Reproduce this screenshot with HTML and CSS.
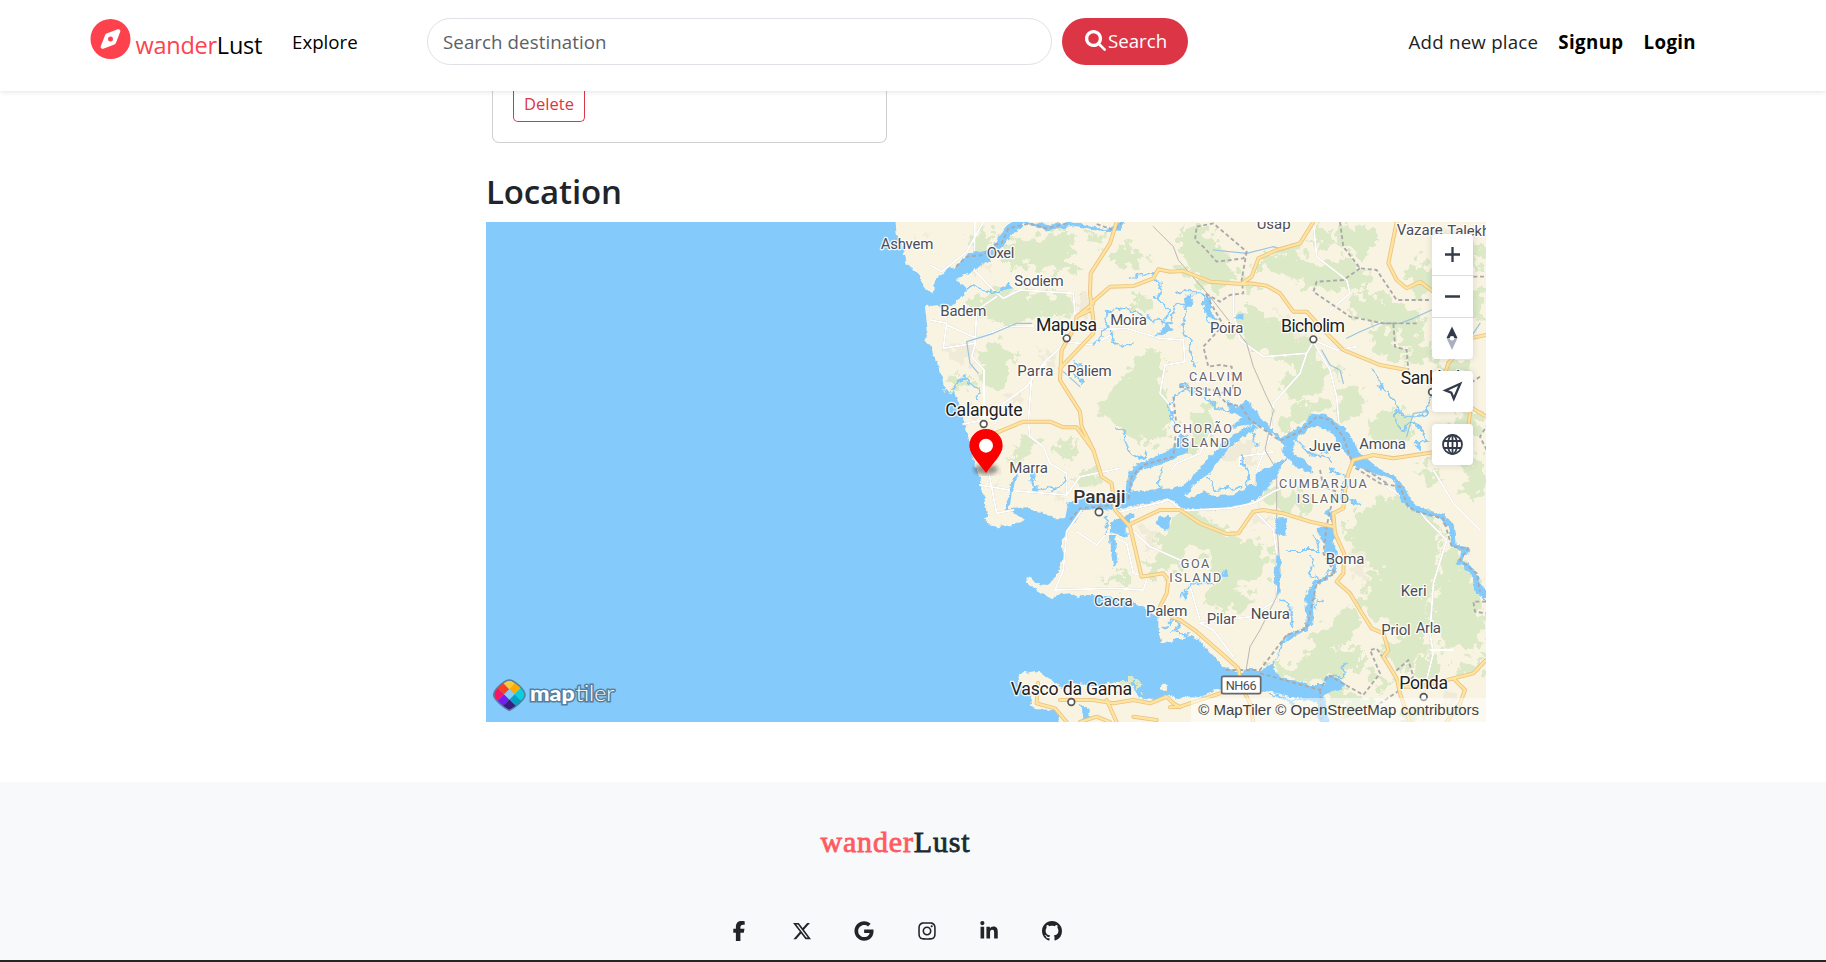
FILE: index.html
```html
<!DOCTYPE html>
<html lang="en">
<head>
<meta charset="utf-8">
<title>wanderLust</title>
<link rel="stylesheet" href="styles.css">
</head>
<body>
<nav class="navbar">
  <a class="brand"><svg class="brand-icon" viewBox="0 0 512 512"><path d="M256 512A256 256 0 1 0 256 0a256 256 0 1 0 0 512zm50.7-186.9L162.4 380.6c-19.4 7.5-38.5-11.6-31-31l55.5-144.3c3.3-8.5 9.9-15.1 18.4-18.4l144.3-55.5c19.4-7.5 38.5 11.6 31 31L325.1 306.7c-3.2 8.5-9.9 15.1-18.4 18.4zM288 256a32 32 0 1 0 -64 0 32 32 0 1 0 64 0z"/></svg><span class="brand-text"><span class="accent">wander</span>Lust</span></a>
  <a class="explore">Explore</a>
  <form class="search">
    <div class="search-input">Search destination</div>
    <div class="search-btn"><svg viewBox="0 0 512 512"><path d="M416 208c0 45.9-14.9 88.3-40 122.7L502.6 457.4c12.5 12.5 12.5 32.8 0 45.3s-32.8 12.5-45.3 0L330.7 376c-34.4 25.2-76.8 40-122.7 40C93.1 416 0 322.9 0 208S93.1 0 208 0S416 93.1 416 208zM208 336a128 128 0 1 0 0-256 128 128 0 1 0 0 256z"/></svg><span>Search</span></div>
  </form>
  <div class="nav-right"><a class="add">Add new place</a><a class="signup">Signup</a><a class="login">Login</a></div>
</nav>

<main class="content">
  <div class="card"><span class="delete">Delete</span></div>
  <h3 class="heading">Location</h3>
  <div class="map">
    <svg class="map-canvas" viewBox="-1182 6 3000 1500">
      <defs>
        <filter id="rough" x="-5%" y="-5%" width="110%" height="110%"><feTurbulence type="fractalNoise" baseFrequency="0.03" numOctaves="4" seed="4"/><feDisplacementMap in="SourceGraphic" scale="90" xChannelSelector="R" yChannelSelector="G"/></filter>
        <filter id="coast" x="-5%" y="-5%" width="110%" height="110%"><feTurbulence type="fractalNoise" baseFrequency="0.05" numOctaves="3" seed="9"/><feDisplacementMap in="SourceGraphic" scale="18" xChannelSelector="R" yChannelSelector="G"/></filter>
        <filter id="creeks" x="-5%" y="-5%" width="110%" height="110%"><feTurbulence type="fractalNoise" baseFrequency="0.04" numOctaves="3" seed="12"/><feDisplacementMap in="SourceGraphic" scale="34" xChannelSelector="R" yChannelSelector="G"/></filter>
        <filter id="soft"><feGaussianBlur stdDeviation="6"/></filter>
        <path id="main-roads" d="M710 6 690 70 632 160 630 220 640 300 640 340 540 445M640 250 590 290 585 320 545 390 540 480 600 575 605 620 640 690 665 770 695 790 705 870 750 920 785 1070 850 1060 865 1080 860 1120 840 1160M632 270 590 290M633 250 690 200 760 198 820 175 835 148 870 155 910 153 990 185 1085 192 1110 190 1160 197 1200 220 1240 275 1280 275 1340 340 1390 390 1500 435 1580 450M1085 190 1115 170 1135 115 1190 90 1260 70 1300 6M345 640 430 605 510 605 550 622 590 622 640 690M745 915 840 870 900 870 960 910 1040 942 1075 940 1120 875 1150 870 1210 880 1290 905 1358 920M1405 760 1395 810 1390 865 1360 880 1365 940 1392 1000 1390 1060 1370 1085 1410 1120 1440 1170 1475 1225 1510 1240 1525 1290 1510 1310 1550 1375 1560 1420 1590 1506M1405 760 1420 720 1480 705 1540 715 1640 700 1700 690 1765 620 1770 580M1550 6 1525 130 1550 180 1580 205 1620 185 1660 215M1818 345 1770 355 1705 430 1695 460M1770 560 1818 590M875 1190 900 1200 950 1235 1030 1305 1075 1345 1085 1400 1110 1450 1120 1506M870 1462 900 1460 1020 1420M474 1388 470 1450 525 1465 560 1506M540 1440 640 1440 700 1450 760 1440 810 1450 860 1430 880 1450 900 1462M680 1440 710 1506M600 1506 650 1490 690 1506M760 1490 830 1500M1818 1320 1780 1360 1720 1375 1620 1400 1560 1400M1720 1375 1755 1410 1740 1450 1700 1506"/>
      </defs>
      <rect class="water" x="-1182" y="6" width="3000" height="1500"/>
      <g filter="url(#coast)">
        <path class="land" d="M45 -10 50 40 70 75 80 130 105 150 125 180 130 200 157 222 165 185 200 150 228 140 250 115 270 100 300 100 300 140 225 178 262 212 215 255 180 262 172 256 135 258 138 290 143 330 135 360 152 380 165 420 178 440 190 495 210 520 225 515 235 545 245 580 255 610 265 650 275 700 290 750 300 770 315 850 325 888 312 895 330 915 350 922 400 915 435 900 415 885 385 870 400 866 440 862 480 878 520 895 555 895 565 850 605 850 608 870 545 960 548 1010 530 1070 500 1095 485 1093 440 1070 440 1083 480 1120 515 1140 525 1125 570 1120 590 1130 640 1125 700 1135 760 1145 800 1170 835 1190 835 1230 845 1270 880 1260 930 1248 960 1260 990 1300 1030 1340 1090 1360 1200 1400 1010 1412 960 1430 900 1435 860 1425 830 1440 800 1438 770 1424 760 1395 710 1385 650 1402 600 1390 540 1400 510 1378 475 1352 430 1360 415 1370 422 1395 455 1420 450 1455 470 1468 525 1470 540 1520H1850V-10Z"/>
        <ellipse class="land" cx="852" cy="1402" rx="9" ry="11"/>
      </g>
      <g class="built" filter="url(#rough)">
        <path d="M100 60 130 50 125 90ZM280 140 340 125 330 170ZM580 230 630 240 610 300ZM200 380 260 370 280 420 220 430ZM230 570 290 560 280 600ZM380 530 430 500 410 560ZM330 770 360 760 350 800ZM960 90 1050 80 1050 170 990 170ZM1130 860 1180 890 1120 920ZM780 920 840 940 810 1000ZM1410 980 1480 1000 1440 1090ZM1310 1310 1360 1310 1330 1370ZM520 800 560 850 530 840ZM480 400 530 390 510 440ZM1190 260 1290 340 1240 360ZM1690 1400 1740 1440 1690 1480ZM1690 620 1760 640 1720 690ZM1020 680 1110 660 1130 740 1060 720Z"/>
      </g>
      <g class="wood" filter="url(#rough)">
        <path d="M265 60 310 20 350 50 310 90 260 90ZM370 90 440 45 500 50 560 35 590 75 560 110 600 150 520 160 450 140 380 135ZM270 235 340 205 420 215 500 215 580 235 570 295 470 285 400 325 330 295 270 275ZM280 400 340 365 395 380 395 430 375 510 330 515 295 470 320 440ZM200 500 240 465 290 480 250 500 215 520ZM650 570 740 460 790 390 855 400 850 530 880 600 830 650 790 610 700 600ZM740 270 770 230 825 235 810 270ZM620 30 680 50 660 80 630 60ZM680 115 740 60 790 110 785 155 740 140ZM395 700 440 650 480 655 460 690 410 730ZM520 675 570 640 600 690 570 730 540 710ZM580 780 620 750 665 755 640 800 595 800Z"/>
        <path d="M900 10 990 30 1030 90 980 130 960 190 900 130ZM1110 130 1230 80 1320 140 1400 110 1470 160 1450 210 1330 210 1230 170ZM1400 260 1450 210 1560 240 1600 300 1530 320 1450 300ZM1060 310 1110 260 1200 310 1300 360 1330 430 1260 450 1170 400 1100 380ZM930 140 1030 90 1070 160 1050 200 960 210ZM1080 170 1150 200 1100 220ZM1370 20 1460 10 1490 60 1450 110 1380 80ZM1580 160 1630 110 1700 160 1650 220 1600 220ZM1570 270 1640 290 1620 360 1690 430 1600 430 1560 370ZM1460 340 1530 310 1540 370 1590 430 1500 410ZM1200 490 1270 430 1350 460 1310 520 1220 540ZM1360 550 1430 490 1460 560 1400 610ZM1460 600 1570 560 1610 640 1560 690 1470 640ZM1680 430 1780 400 1780 470 1690 485ZM1720 570 1800 580 1815 640 1740 665ZM1740 60 1810 80 1800 135 1740 115ZM930 600 990 550 1000 640 950 680 920 730ZM1350 450 1390 440 1390 470ZM1280 70 1330 20 1380 80ZM1190 590 1260 545 1330 540 1340 570 1270 600 1210 640ZM1700 230 1800 200 1810 300 1730 320Z"/>
        <path d="M1140 820 1270 800 1320 850 1260 880 1180 865ZM1390 920 1500 820 1600 850 1665 910 1690 960 1660 1030 1700 1060 1650 1130 1500 1135 1440 1070 1500 1060 1430 990ZM1420 1140 1530 1110 1650 1130 1640 1220 1600 1290 1520 1210ZM1340 1200 1400 1150 1440 1190 1390 1290 1310 1260ZM1690 980 1730 990 1800 1100 1805 1300 1690 1280 1640 1190 1680 1110ZM1500 1290 1620 1230 1640 1300 1580 1360ZM1640 1300 1700 1320 1660 1410 1600 1370ZM1720 1350 1810 1310 1810 1330 1750 1380ZM1180 1360 1270 1310 1330 1230 1370 1290 1450 1290 1430 1350 1320 1390 1220 1380ZM1150 1330 1180 1310 1240 1370 1200 1380ZM1330 1400 1400 1400 1490 1450 1390 1480ZM1730 700 1770 780 1740 810 1790 840 1815 790 1815 710ZM1600 740 1650 720 1690 790 1650 780Z"/>
        <path d="M870 900 940 870 1060 950 1090 945 1170 1000 1140 1090 1060 1110 1120 1140 1060 1180 970 1150 1010 1060 960 990 840 980 850 940ZM820 970 850 940 900 960 920 1020 870 1060 800 1060 790 1020 840 1010ZM660 1070 750 1060 750 1100 690 1080ZM650 560 690 530 700 580ZM850 540 890 600 810 680 730 640 680 590ZM1460 1350 1530 1380 1500 1420ZM1560 1470 1620 1460 1640 1506H1570ZM700 1380 740 1380 770 1410 720 1415Z"/>
      </g>
      <g class="minor">
        <path d="M285 6 282 150 345 215 370 235 420 210 580 220 585 280 590 320M150 135 185 155 260 95 310 6M350 230 290 270 285 370 190 385 200 310 150 300M200 315 290 355 380 320 460 318M285 375 275 410 312 450 312 600M312 600 250 612M345 610 370 550 440 500 490 430 560 365M445 605 455 470 500 430M445 605 450 650 490 680 510 730 560 760 560 825M300 795 400 812 560 825 600 770 720 745M325 750 350 880 400 870M640 330 740 325 840 355 910 360 915 425 855 435 840 520 875 560 880 620M560 365 640 375 700 340M605 870 560 935 550 1050 525 1110 700 1105 790 1110 800 1080M590 935 650 975 680 940 740 970 760 1060 800 1070M745 920 810 980 900 1020"/>
        <path d="M1300 6 1310 110 1400 180 1410 220 1350 270M1060 200 1060 280 1080 360 1150 410 1280 400 1300 365M1280 400 1260 460 1180 550 1170 650 1130 750M1300 365 1350 450 1370 530 1380 650M1300 360 1370 390 1430 380M1470 750 1520 800 1600 850 1640 900 1700 960 1660 1090 1650 1240 1660 1300 1640 1380 1640 1430M1660 750 1720 850 1800 930M1130 880 1180 930 1190 1000 1190 1140 1110 1190 960 1210 1000 1230 1060 1310M875 750 890 730 960 700 990 640M1080 740 1080 710 1180 695M920 1065 960 1200M1650 1290 1720 1290"/>
      </g>
      <g class="rail"><path d="M820 20 880 80 895 120 990 230 1100 370 1120 440 1160 530 1180 570 1155 690 1190 750 1190 900 1200 1050 1190 1130 1140 1230 1110 1280 1090 1400"/></g>
      <g filter="url(#coast)">
        <path class="water" d="M228 145 270 100 340 85 370 30 400 -10H430L425 30 390 45 365 85 320 125 250 160ZM425 6H460L500 15 590 6 640 20 680 28 725 6 735 10 720 35 640 30 590 18 500 32Z"/>
        <path class="water" d="M560 850 600 838 700 830 750 815 790 810 860 806 880 805 900 800 940 770 980 720 1010 690 1040 660 1080 630 1120 612 1135 625 1060 670 1010 730 990 760 950 785 912 830 945 835 970 812 1000 828 1060 826 1100 800 1130 795 1130 755 1160 745 1200 725 1232 708 1230 690 1200 665 1190 650 1205 655 1260 620 1300 582 1340 585 1380 615 1410 640 1430 690 1450 710 1500 750 1540 765 1570 800 1600 850 1630 865 1690 885 1725 920 1730 975 1772 985 1745 1020 1785 1050 1800 1090 1818 1110V1145L1785 1115 1775 1060 1730 1025 1745 995 1715 980 1705 925 1680 895 1600 875 1565 845 1540 780 1480 760 1430 745 1390 690 1360 645 1310 615 1240 660 1240 700 1210 730 1180 780 1140 830 1080 858 1000 868 910 868 870 838 850 840 720 868 605 870Z"/>
        <path class="water" d="M760 738 820 712 880 685 900 640 925 645 920 700 850 732 775 752 750 815 735 815 745 765ZM1040 540 1070 560 1100 540 1140 590 1190 640 1205 660 1160 630 1120 612 1050 622 1090 592 1050 575ZM690 905 765 880 740 920 740 955 690 935ZM685 945 705 945 715 1020 700 1040 690 980ZM838 888 870 885 868 925 850 930 830 910ZM1186 895 1222 895 1216 945 1186 942ZM1190 1000 1203 1010 1198 1130 1182 1080ZM1310 925 1350 915 1350 890 1330 880 1350 870 1370 920 1350 1000 1338 990 1320 950Z"/>
        <path class="water" d="M1090 1350 1140 1350 1180 1330 1200 1285 1220 1245 1270 1225 1280 1200 1275 1130 1300 1085 1350 1065 1360 1040 1340 1030 1330 960 1350 950 1370 990 1370 1060 1310 1095 1300 1150 1300 1210 1280 1230 1220 1260 1190 1310 1180 1350 1200 1370 1290 1395 1330 1395 1340 1365 1370 1370 1395 1390 1380 1405 1335 1425 1345 1506H1318L1310 1450 1220 1425 1140 1410 1090 1390Z"/>
        <path class="water" d="M1200 690 1240 665 1240 700 1290 735 1300 760 1250 745ZM825 350 860 310 885 330 855 340ZM912 235 940 225 935 260 915 260ZM975 230 990 235 990 275 1015 300 980 290ZM1063 290 1090 280 1090 300ZM370 210 385 185 395 205ZM600 1450 630 1475 620 1506H610ZM1010 1070 1040 1050 1045 1070ZM455 740 475 785 450 770ZM375 870 400 770 415 762 395 820 388 870ZM1600 675 1625 670 1620 695ZM905 1120 925 1110 915 1145Z"/>
      </g>
      <g filter="url(#creeks)">
        <path class="creek" d="M257 205 280 195 300 210 340 215 375 205M205 520 250 475 290 500 295 540M640 370 680 330 675 280 710 262 760 275 820 300 870 310 890 260 930 240M745 175 810 160 840 190 830 230 870 270 850 310M690 340 710 380 770 370M715 625 740 650 740 690 790 720 800 690M880 620 870 560 885 520 930 510M920 240 905 320 930 370 945 440M900 220 970 220 985 300 1015 320M900 500 960 510 1010 560 1080 580M1480 450 1500 500 1540 530 1550 570 1570 590 1640 580 1650 530 1690 510M1550 570 1545 610 1570 630 1600 610 1630 630 1640 660 1610 670M1240 640 1300 600M1240 650 1290 700 1350 720M1320 700 1380 680M1350 750 1400 770 1390 830 1440 860M1230 990 1320 990 1300 940M1360 1040 1320 1090 1290 1060 1300 1010M1310 1170 1310 1135 1330 1145M1200 1140 1225 1150 1230 1180 1245 1220M1340 1365 1390 1370 1390 1340 1400 1330M1170 1420 1230 1445 1310 1430M850 1225 880 1195 900 1220 880 1240 930 1240M900 1130 940 1090 1000 1090M450 745 460 800 520 810 560 780M600 440 580 430 600 490M680 880 680 940M980 780 1010 810 1080 800M1080 710 1110 760 1100 800M1120 640 1130 680M840 740 845 800"/>
      </g>
      <g class="stream"><path d="M455 310H410L340 340 260 365 270 430 295 460M550 455 600 500M1325 390 1350 435 1380 450 1390 490M1400 355 1440 335 1500 310 1560 310 1600 295 1700 250M1580 650 1600 580 1640 575M1000 90 1100 100 1180 80 1210 90M1740 400 1800 310"/></g>
      <g class="minor"><path d="M720 875 850 845 862 838 880 848 905 872 1050 865 1120 850 1180 815 1240 790 1300 800"/></g>
      <g class="border"><path d="M228 140 260 110 310 105 340 75 365 70 385 25 450 10 500 25 560 10M650 12 700 30 725 10M1460 750 1520 790M950 20 1000 10 1100 95 1090 115 1010 125 970 80 945 60ZM1100 95 1085 180 1090 220 1050 225 1020 245 975 220 1030 315 970 380 985 440 1020 435 1055 440 1060 510 1020 520M1380 6 1390 80 1440 145 1490 150 1550 240 1655 240M1440 145 1390 180 1310 185 1300 215 1410 290 1510 310 1540 310 1545 380 1580 390 1585 450M1610 310 1510 310M1740 170H1818M1800 470 1740 510M900 500 1000 510 1040 550 1085 560 1110 600 1200 662 1260 635 1310 590 1350 600 1390 650 1420 740 1500 790 1560 800 1585 860 1610 875 1690 895 1715 980 1765 985 1740 1020 1790 1060 1800 1115M880 530 890 620 880 710 790 735 755 770 745 840M570 900 600 865 700 855M1320 750 1330 800 1370 815 1350 870 1340 920 1330 1000 1365 1060 1310 1090 1290 1180 1280 1225 1220 1245 1140 1350 1030 1350M1140 1360 1320 1410 1345 1365 1450 1425 1500 1360 1470 1290 1490 1285 1540 1360 1585 1320 1600 1370 1560 1410 1500 1450M1320 1410 1325 1500M1825 610 1800 650 1825 700M1818 1145 1780 1145 1785 1175 1818 1180"/></g>
      <use href="#main-roads" class="casing"/>
      <use href="#main-roads" class="road"/>
      <g class="label">
        <text x="2" y="87" textLength="158">Ashvem</text><text x="320" y="113" textLength="83">Oxel</text><text x="403" y="198" textLength="148">Sodiem</text><text x="181" y="289" textLength="138">Badem</text><text x="691" y="315" textLength="110">Moira</text><text x="412" y="468" textLength="108">Parra</text><text x="561" y="469" textLength="134">Paliem</text><text x="388" y="758" textLength="116">Marra</text><text x="1130" y="27" textLength="102">Usap</text><text x="1550" y="44" textLength="138">Vazare</text><text x="1702" y="49" textLength="164">Talekhol</text><text x="990" y="340" textLength="100">Poira</text><text x="1438" y="686" textLength="140">Amona</text><text x="1287" y="692" textLength="95">Juve</text><text x="1337" y="1032" textLength="116">Boma</text><text x="1562" y="1128" textLength="78">Keri</text><text x="1504" y="1244" textLength="88">Priol</text><text x="1607" y="1238" textLength="76">Arla</text><text x="1112" y="1197" textLength="118">Neura</text><text x="980" y="1211" textLength="88">Pilar</text><text x="798" y="1187" textLength="124">Palem</text><text x="642" y="1157" textLength="116">Cacra</text>
      </g>
      <g class="island">
        <text x="927" y="484" textLength="161">CALVIM</text><text x="930" y="527" textLength="155">ISLAND</text><text x="879" y="638" textLength="177">CHORÃO</text><text x="889" y="681" textLength="158">ISLAND</text><text x="1197" y="805" textLength="263">CUMBARJUA</text><text x="1250" y="848" textLength="157">ISLAND</text><text x="902" y="1043" textLength="86">GOA</text><text x="868" y="1086" textLength="156">ISLAND</text>
      </g>
      <g class="dot"><circle cx="560" cy="355" r="10"/><circle cx="311" cy="612" r="10"/><circle cx="1300" cy="358" r="10"/><circle cx="1656" cy="516" r="10"/><circle cx="657" cy="876" r="11"/><circle cx="574" cy="1446" r="10"/><circle cx="1631" cy="1431" r="10"/></g>
      <g class="town">
        <text x="468" y="333" textLength="183">Mapusa</text><text x="196" y="589" textLength="232">Calangute</text><text x="1203" y="335" textLength="192">Bicholim</text><text x="1562" y="491" textLength="190">Sankhali</text><text x="392" y="1425" textLength="364">Vasco da Gama</text><text x="1558" y="1408" textLength="146">Ponda</text><text class="capital" x="580" y="850" textLength="157">Panaji</text>
      </g>
      <rect class="shield" x="1025" y="1369" width="117" height="52" rx="5"/><text class="shield-text" x="1037" y="1409" textLength="93">NH66</text>
      <ellipse cx="318" cy="748" rx="36" ry="16" fill="#000" opacity=".4" filter="url(#soft)"/>
      <path fill="#fb0000" d="M318 759C300 732 268 704 268 677A50 50 0 0 1 368 677C368 704 336 732 318 759Z"/><circle cx="318" cy="677" r="21" fill="#fff"/>
    </svg>
    <svg class="map-logo" viewBox="0 0 420 120">
      <path d="M70 17C58 17 27 42 25 59C25 72 55 96 70 104C85 96 115 72 115 59C113 42 82 17 70 17Z" fill="none" stroke="#587f9f" stroke-width="9"/>
      <clipPath id="pin"><path d="M70 17C58 17 27 42 25 59C25 72 55 96 70 104C85 96 115 72 115 59C113 42 82 17 70 17Z"/></clipPath>
      <g clip-path="url(#pin)"><g transform="translate(70 58) rotate(45)"><path fill="#fc3f1d" d="M-40-11h29v22h-29z"/><path fill="#fbc935" d="M-40-40h29v29h-29z"/><path fill="#ffaa01" d="M-11-40h22v29h-22z"/><path fill="#05d0df" d="M11-40h29v29h-29z"/><path fill="#03a1c4" d="M11-11h29v22h-29z"/><path fill="#fb1260" d="M-40 11h29v29h-29z"/><path fill="#761ef0" d="M-11 11h22v29h-22z"/><path fill="#3b1a84" d="M11 11h29v29h-29z"/><path fill="#84cafa" d="M-11-11h22v22h-22z"/></g></g>
      <text class="logo-bold" x="132" y="78" textLength="134" lengthAdjust="spacingAndGlyphs">map</text><text class="logo-thin" x="269" y="78" textLength="116" lengthAdjust="spacingAndGlyphs">tiler</text>
    </svg>
    <div class="controls">
      <div class="ctrl-group">
        <span class="ctrl"><svg viewBox="0 0 41 41"><path d="M20.5 13v15M13 20.5h15"/></svg></span>
        <span class="ctrl"><svg viewBox="0 0 41 41"><path d="M13 20.5h15"/></svg></span>
        <span class="ctrl"><svg viewBox="0 0 41 41"><path class="solid" d="M20 8.5 25.5 20h-11z"/><path class="pale" d="M20 32 25.5 20h-11z"/><circle class="hub" cx="20" cy="20.3" r="2.3"/></svg></span>
      </div>
      <div class="ctrl-group"><span class="ctrl"><svg viewBox="0 0 41 41"><path class="outline" d="M28.2 12.8 13.5 19.5 19.3 21.6 21.8 27.8Z"/></svg></span></div>
      <div class="ctrl-group"><span class="ctrl"><svg viewBox="0 0 41 41"><g class="globe"><circle cx="20.5" cy="20.5" r="9.5"/><ellipse cx="20.5" cy="20.5" rx="4.6" ry="9.5"/><path d="M20.5 11v19M12 17h17M12 24h17"/></g></svg></span></div>
    </div>
    <div class="attribution">© MapTiler © OpenStreetMap contributors</div>
  </div>
</main>

<footer class="footer">
  <div class="footer-brand"><span>wander</span>Lust</div>
  <div class="social">
    <svg viewBox="0 0 320 512"><path d="M80 299.3V512H196V299.3h86.5l18-97.8H196V166.9c0-51.7 20.3-71.5 72.7-71.5c16.3 0 29.4 .4 37 1.2V7.9C291.4 4 256.4 0 236.2 0C129.3 0 80 50.5 80 159.4v42.1H14v97.8H80z"/></svg>
    <svg viewBox="0 0 512 512"><path d="M389.2 48h70.6L305.6 224.2 487 464H345L233.7 318.6 106.5 464H35.8L200.7 275.5 26.8 48H172.4L272.9 180.9 389.2 48zM364.4 421.8h39.1L151.1 88h-42L364.4 421.8z"/></svg>
    <svg viewBox="0 0 488 512"><path d="M488 261.8C488 403.3 391.1 504 248 504 110.8 504 0 393.2 0 256S110.8 8 248 8c66.8 0 123 24.5 166.3 64.9l-67.5 64.9C258.5 52.6 94.3 116.6 94.3 256c0 86.5 69.1 156.6 153.7 156.6 98.2 0 135-70.4 140.8-106.9H248v-85.3h236.1c2.3 12.7 3.9 24.9 3.9 41.4z"/></svg>
    <svg viewBox="0 0 448 512"><path d="M224.1 141c-63.6 0-114.9 51.3-114.9 114.9s51.3 114.9 114.9 114.9S339 319.5 339 255.9 287.7 141 224.1 141zm0 189.6c-41.1 0-74.7-33.5-74.7-74.7s33.5-74.7 74.7-74.7 74.7 33.5 74.7 74.7-33.6 74.7-74.7 74.7zm146.4-194.3c0 14.9-12 26.8-26.8 26.8-14.9 0-26.8-12-26.8-26.8s12-26.8 26.8-26.8 26.8 12 26.8 26.8zm76.1 27.2c-1.7-35.9-9.9-67.7-36.2-93.9-26.2-26.2-58-34.4-93.9-36.2-37-2.1-147.9-2.1-184.9 0-35.8 1.7-67.6 9.9-93.9 36.1s-34.4 58-36.2 93.9c-2.1 37-2.1 147.9 0 184.9 1.7 35.9 9.9 67.7 36.2 93.9s58 34.4 93.9 36.2c37 2.1 147.9 2.1 184.9 0 35.9-1.7 67.7-9.9 93.9-36.2 26.2-26.2 34.4-58 36.2-93.9 2.1-37 2.1-147.8 0-184.8zM398.8 388c-7.8 19.6-22.9 34.7-42.6 42.6-29.5 11.7-99.5 9-132.1 9s-102.7 2.6-132.1-9c-19.6-7.8-34.7-22.9-42.6-42.6-11.7-29.5-9-99.5-9-132.1s-2.6-102.7 9-132.1c7.8-19.6 22.9-34.7 42.6-42.6 29.5-11.7 99.5-9 132.1-9s102.7-2.6 132.1 9c19.6 7.8 34.7 22.9 42.6 42.6 11.7 29.5 9 99.5 9 132.1s2.7 102.7-9 132.1z"/></svg>
    <svg viewBox="0 0 448 512"><path d="M100.28 448H7.4V148.9h92.88zM53.79 108.1C24.09 108.1 0 83.5 0 53.8a53.79 53.79 0 0 1 107.58 0c0 29.7-24.1 54.3-53.79 54.3zM447.9 448h-92.68V302.4c0-34.7-.7-79.2-48.29-79.2-48.29 0-55.69 37.7-55.69 76.7V448h-92.78V148.9h89.08v40.8h1.3c12.4-23.5 42.69-48.3 87.88-48.3 94 0 111.28 61.9 111.28 142.3V448z"/></svg>
    <svg viewBox="0 0 16 16"><path d="M8 0C3.58 0 0 3.58 0 8c0 3.54 2.29 6.53 5.47 7.59.4.07.55-.17.55-.38 0-.19-.01-.82-.01-1.49-2.01.37-2.53-.49-2.69-.94-.09-.23-.48-.94-.82-1.13-.28-.15-.68-.52-.01-.53.63-.01 1.08.58 1.23.82.72 1.21 1.87.87 2.33.66.07-.52.28-.87.51-1.07-1.78-.2-3.64-.89-3.64-3.95 0-.87.31-1.59.82-2.15-.08-.2-.36-1.02.08-2.12 0 0 .67-.21 2.2.82.64-.18 1.32-.27 2-.27s1.36.09 2 .27c1.53-1.04 2.2-.82 2.2-.82.44 1.1.16 1.92.08 2.12.51.56.82 1.27.82 2.15 0 3.07-1.87 3.75-3.65 3.95.29.25.54.73.54 1.48 0 1.07-.01 1.93-.01 2.2 0 .21.15.46.55.38A8.01 8.01 0 0 0 16 8c0-4.42-3.58-8-8-8z"/></svg>
  </div>
</footer>
</body>
</html>
```
FILE: styles.css
```css
* { box-sizing: border-box; }
body { margin: 0; height: 962px; overflow: hidden; display: flex; flex-direction: column; background: #fff; color: #212529; font-family: "Open Sans", "Noto Sans", sans-serif; font-size: 18.7px; line-height: 28px; }
.navbar { position: relative; z-index: 2; flex: none; display: flex; align-items: flex-start; height: 91px; padding: 18px 130px 0 90px; background: #fff; color: #000; box-shadow: 0 0 6px rgba(0,0,0,.15); white-space: nowrap; }
.brand { display: flex; width: 202px; padding-top: 1px; }
.brand-icon { width: 41px; height: 40px; fill: #fe424d; }
.brand-text { margin: 12px 0 0 4.5px; font-size: 23.5px; letter-spacing: -.25px; }
.accent { color: #fe424d; }
.explore { width: 135px; padding-top: 10px; }
.search { display: flex; gap: 10px; margin: 0; }
.search-input { width: 625px; height: 47px; border: 1px solid #dee2e6; border-radius: 24px; padding: 9px 15px; color: #5c6066; letter-spacing: .08px; }
.search-btn { display: flex; width: 126px; height: 47px; padding: 9px 0 0 23px; background: #dc3545; color: #fff; border-radius: 24px; gap: 2px; }
.search-btn svg { width: 21px; height: 21px; margin-top: 3px; fill: #fff; }
.nav-right { display: flex; margin-left: auto; padding-top: 10px; gap: 20px; }
.add { color: #222; letter-spacing: .22px; }
.signup { font-weight: 700; letter-spacing: .4px; }
.login { font-weight: 700; letter-spacing: .35px; }
.content { flex: none; width: 1000px; margin-left: 486px; height: 691px; }
.card { width: 395px; height: 52px; margin-left: 6px; padding-left: 20px; border: 1px solid #ced0d2; border-top: 0; border-radius: 0 0 7px 7px; }
.delete { display: block; width: 72px; height: 31px; border: 1px solid #dc3545; border-top: 0; border-radius: 0 0 5px 5px; color: #dc3545; font-size: 16.5px; line-height: 25px; text-align: center; }
.heading { margin: 29px 0 0; height: 50px; font-size: 33px; line-height: 40px; font-weight: 600; letter-spacing: -.15px; }
.map { position: relative; width: 1000px; height: 500px; overflow: hidden; }
.map-canvas { display: block; width: 1000px; height: 500px; font-family: Roboto, sans-serif; }
.water { fill: #84cafa; }
.land { fill: #f9f3e2; }
.wood { fill: #dbe9c6; }
.built { fill: #eeead6; opacity: .8; }
.minor, .rail, .creek, .stream, .border, .casing, .road { fill: none; stroke-linejoin: round; stroke-linecap: round; }
.minor { stroke: #fff; stroke-width: 6; filter: drop-shadow(0 0 1.5px #b9b4ab); }
.rail { stroke: #bbb8b3; stroke-width: 3; }
.creek { stroke: #84cafa; stroke-width: 6; }
.stream { stroke: #97c4e0; stroke-width: 3.5; }
.border { stroke: #a9a9ab; stroke-width: 5.5; stroke-dasharray: 12 8; stroke-linecap: butt; }
.casing { stroke: #ecc183; stroke-width: 12; }
.road { stroke: #fee49c; stroke-width: 7; }
.label, .island, .town { paint-order: stroke; stroke: rgba(255,255,255,.85); stroke-width: 8; stroke-linejoin: round; }
.label { fill: #4c4d55; font-size: 45px; }
.island { fill: #62636b; font-size: 38px; }
.town { fill: #222; font-size: 53px; }
.capital { font-size: 57px; font-weight: 500; fill: #333; }
.dot { fill: #fff; stroke: #555; stroke-width: 5; }
.shield { fill: #fff; stroke: #66676b; stroke-width: 5; }
.shield-text { fill: #4c4d55; font-size: 38px; }
.map-logo { position: absolute; left: 0; top: 453px; width: 140px; height: 40px; font-family: Lato, sans-serif; }
.logo-bold, .logo-thin { fill: #fff; stroke: #587f9f; stroke-width: 9; paint-order: stroke; font-size: 62px; }
.logo-bold { font-weight: 900; }
.logo-thin { font-weight: 300; }
.controls { position: absolute; left: 946px; top: 12px; display: flex; flex-direction: column; gap: 12px; }
.ctrl-group { display: flex; flex-direction: column; gap: 1px; width: 41px; border-radius: 4px; background: #ddd; box-shadow: 0 0 7px rgba(50,50,50,.18); overflow: hidden; }
.ctrl { display: block; height: 41px; background: #fff; }
.ctrl svg { display: block; width: 41px; height: 41px; fill: none; stroke: #333b48; stroke-width: 2.3; }
.ctrl .solid { fill: #333b48; stroke: none; }
.ctrl .pale { fill: #aab0c2; stroke: none; }
.ctrl .hub { fill: #fff; stroke: none; }
.globe { stroke-width: 1.8; }
.attribution { position: absolute; right: 0; bottom: 0; height: 24px; padding: 0 7px; background: rgba(255,255,255,.5); color: #404040; font: 15px/24px "Liberation Sans", sans-serif; white-space: nowrap; }
.footer { flex: 1; display: flex; flex-direction: column; align-items: center; background: #f7f9fb; border-bottom: 2px solid #222525; padding: 43px 35px 0 0; }
.footer-brand { height: 95.5px; font: 30px/34px "Liberation Serif", serif; -webkit-text-stroke: .8px currentColor; color: #1b2a33; letter-spacing: .85px; }
.footer-brand span { color: #ff5a5f; }
.social { display: flex; gap: 42.5px; }
.social svg { width: 20px; height: 20px; fill: #212529; }
```
